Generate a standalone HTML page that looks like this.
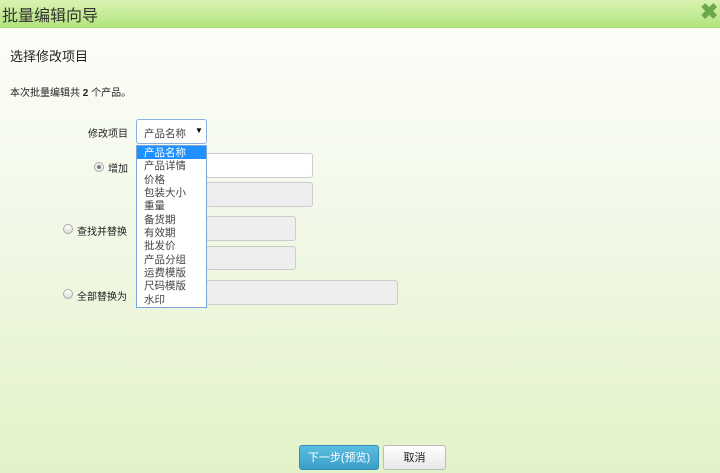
<!DOCTYPE html>
<html><head><meta charset="utf-8"><style>
*{margin:0;padding:0;box-sizing:border-box}
body{width:720px;height:473px;overflow:hidden;font-family:"Liberation Sans","Noto Sans CJK SC",sans-serif;background:linear-gradient(#fbfdf8 30px,#f3f9ea 200px,#e2f2c8 473px);position:relative;color:#222}
.hdr{position:absolute;left:0;top:0;width:720px;height:28px;background:linear-gradient(#d9f2b0,#b2e57e);border-bottom:1px solid #a4dc70}
.hdr span{position:absolute;left:2px;top:2px;font-size:16px;color:#333}
.x{position:absolute;left:700px;top:1px;font-size:22px;font-weight:bold;color:#6aa84a;line-height:22px}
.a{position:absolute;white-space:nowrap}
.in{position:absolute;border:1px solid #ccc;border-radius:3px;background:#eee}
.r{position:absolute;width:10px;height:10px;border-radius:50%;border:1px solid #aaa;background:linear-gradient(#fff,#ddd)}
.lst{position:absolute;left:136px;top:145px;width:71px;height:163px;background:#fff;border:1px solid #7aa7d8;font-size:10.5px;color:#444}
.lst div{height:13.35px;line-height:14px;padding-left:7px}
.btn{position:absolute;top:445px;height:25px;border-radius:3px;font-size:11px;text-align:center;line-height:25px}
</style></head><body>
<div class="hdr"><span>批量编辑向导</span><div class="x">✖</div></div>
<div class="a" style="left:10px;top:46px;font-size:13px">选择修改项目</div>
<div class="a" style="left:10px;top:84px;font-size:10px">本次批量编辑共 <b>2</b> 个产品。</div>
<div class="a" style="left:88px;top:125px;font-size:10px">修改项目</div>
<div style="position:absolute;left:136px;top:119px;width:71px;height:25px;background:#fff;border:1px solid #8ab0e0;border-radius:3px;font-size:10.5px;color:#444;padding:6px 0 0 7px">产品名称<span style="position:absolute;left:58px;top:6px;font-size:8px;color:#000">▼</span></div>
<div class="r" style="left:94px;top:162px;background:radial-gradient(#777 30%,#eee 40%)"></div>
<div class="a" style="left:108px;top:160px;font-size:10px">增加</div>
<div class="in" style="left:206px;top:153px;width:107px;height:25px;background:#fff"></div>
<div class="in" style="left:206px;top:182px;width:107px;height:25px"></div>
<div class="r" style="left:63px;top:224px"></div>
<div class="a" style="left:77px;top:223px;font-size:10px">查找并替换</div>
<div class="in" style="left:206px;top:216px;width:90px;height:25px"></div>
<div class="in" style="left:206px;top:246px;width:90px;height:24px"></div>
<div class="r" style="left:63px;top:289px"></div>
<div class="a" style="left:77px;top:288px;font-size:10px">全部替换为</div>
<div class="in" style="left:206px;top:280px;width:192px;height:25px"></div>
<div class="lst">
<div style="background:#1e90ff;color:#fff">产品名称</div><div>产品详情</div><div>价格</div><div>包装大小</div><div>重量</div><div>备货期</div><div>有效期</div><div>批发价</div><div>产品分组</div><div>运费模版</div><div>尺码模版</div><div>水印</div>
</div>
<div class="btn" style="left:299px;width:80px;background:linear-gradient(#5bbde0,#3a9fc8);color:#fff;border:1px solid #3090b8">下一步(预览)</div>
<div class="btn" style="left:383px;width:63px;background:linear-gradient(#fff,#e8e8e8);border:1px solid #bbb">取消</div>
</body></html>
